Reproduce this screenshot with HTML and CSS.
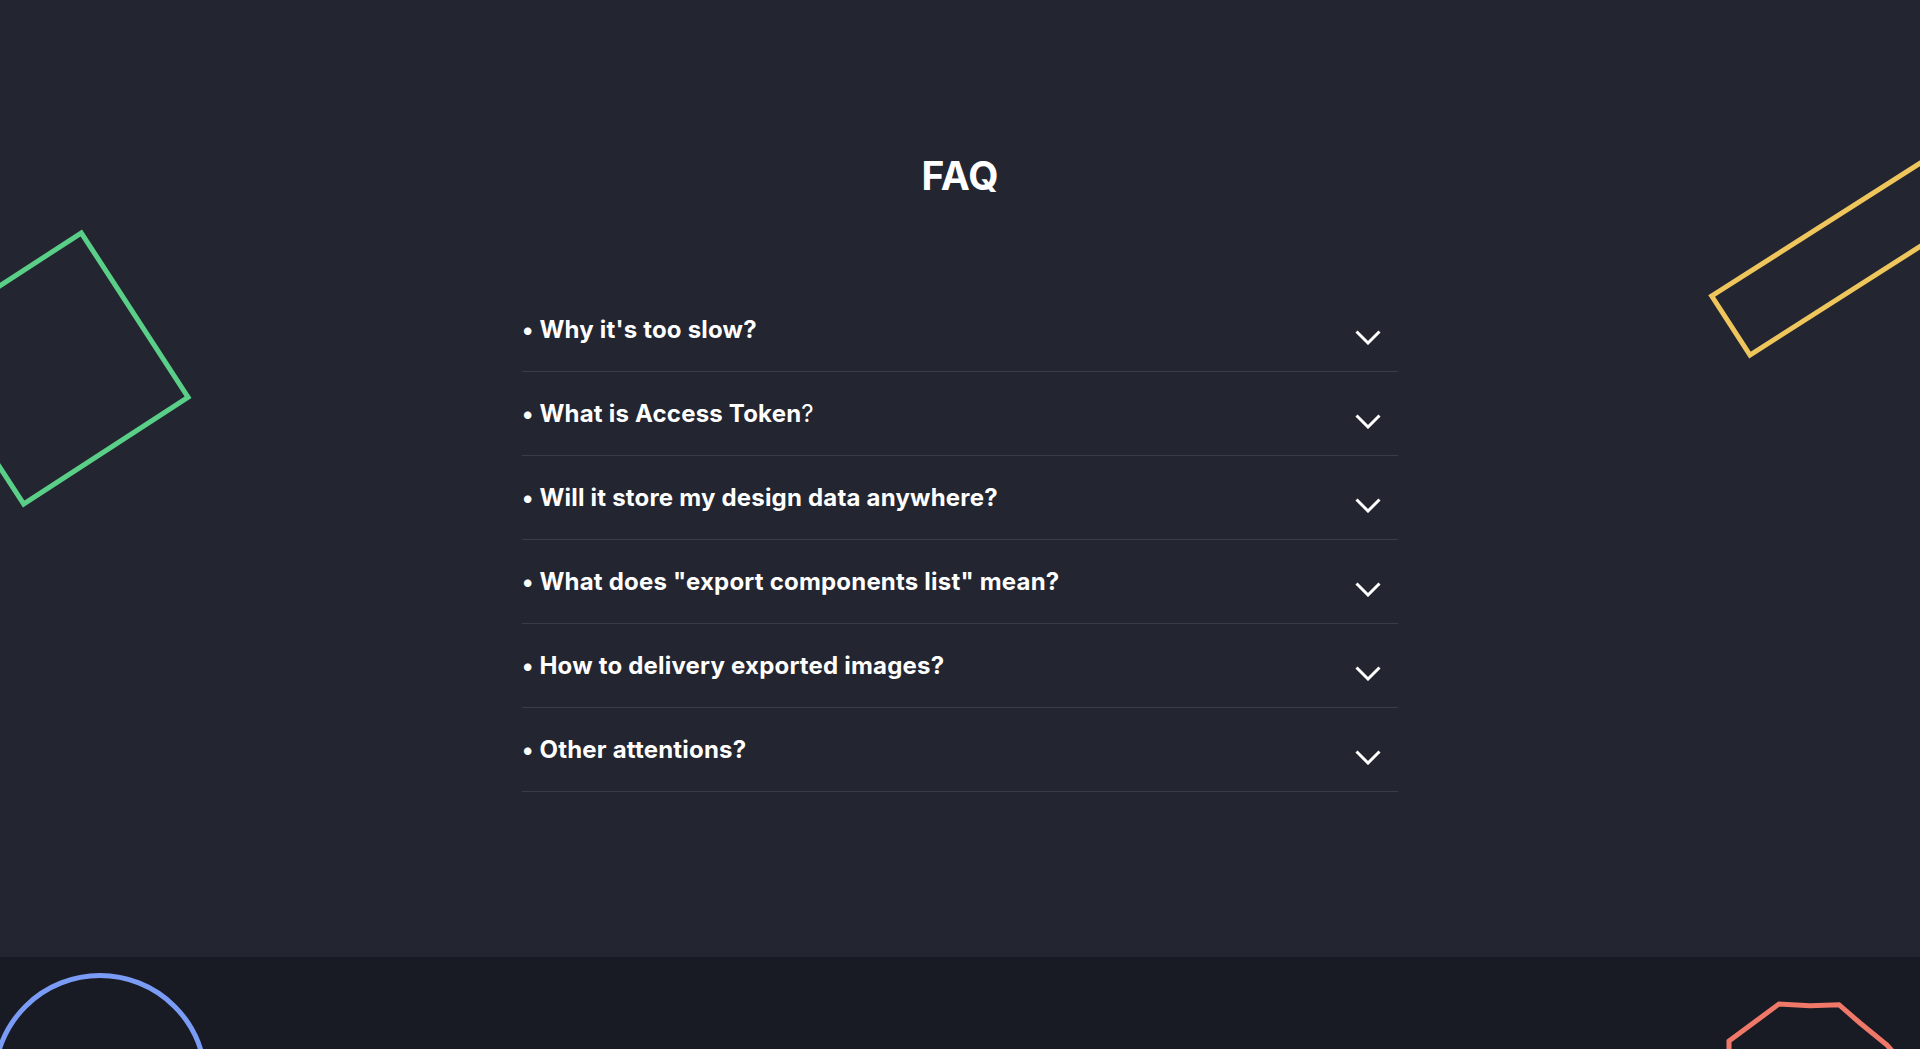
FILE: index.html
```html
<!DOCTYPE html>
<html lang="en">

<head>
  <meta charset="UTF-8">
  <meta name="viewport" content="width=device-width, initial-scale=1.0">
  <title>FAQ</title>
  <link rel="stylesheet" href="styles.css">
</head>

<body>
  <section class="faq">
    <div class="shape-square"></div>
    <svg class="shape-bar" width="230" height="320" viewBox="0 0 230 320">
      <polygon points="21.7,236 60,295 397,80 359,21" fill="none" stroke="#efc65c" stroke-width="5" />
    </svg>

    <h2>FAQ</h2>

    <div class="faq-list">
      <div class="faq-item">
        <span class="question">• Why it's too slow?</span>
        <svg class="chevron" width="26" height="15" viewBox="0 0 26 15">
          <polyline points="1.5,1.5 13,13 24.5,1.5" />
        </svg>
      </div>
      <div class="faq-item">
        <span class="question">• What is Access Token<span class="light">?</span></span>
        <svg class="chevron" width="26" height="15" viewBox="0 0 26 15">
          <polyline points="1.5,1.5 13,13 24.5,1.5" />
        </svg>
      </div>
      <div class="faq-item">
        <span class="question">• Will it store my design data anywhere?</span>
        <svg class="chevron" width="26" height="15" viewBox="0 0 26 15">
          <polyline points="1.5,1.5 13,13 24.5,1.5" />
        </svg>
      </div>
      <div class="faq-item">
        <span class="question">• What does "export components list" mean?</span>
        <svg class="chevron" width="26" height="15" viewBox="0 0 26 15">
          <polyline points="1.5,1.5 13,13 24.5,1.5" />
        </svg>
      </div>
      <div class="faq-item">
        <span class="question">• How to delivery exported images?</span>
        <svg class="chevron" width="26" height="15" viewBox="0 0 26 15">
          <polyline points="1.5,1.5 13,13 24.5,1.5" />
        </svg>
      </div>
      <div class="faq-item">
        <span class="question">• Other attentions?</span>
        <svg class="chevron" width="26" height="15" viewBox="0 0 26 15">
          <polyline points="1.5,1.5 13,13 24.5,1.5" />
        </svg>
      </div>
    </div>
  </section>

  <footer class="footer">
    <div class="shape-circle"></div>
    <svg class="shape-octagon" width="220" height="120" viewBox="0 0 220 120">
      <polyline points="29,120 29,54 79,17 110,18.7 139,17.7 160,36 187,58 215,90"
        fill="none" stroke="#f07868" stroke-width="5" />
    </svg>
  </footer>
</body>

</html>
```

FILE: styles.css
```css
* {
  box-sizing: border-box;
}

body {
  margin: 0;
  background-color: #181a24;
  font-family: Inter, "Noto Sans", sans-serif;
  color: #fff;
  overflow: hidden;
}

.faq {
  position: relative;
  height: 957px;
  padding-top: 153px;
  background-color: #232530;
  overflow: hidden;

  >h2 {
    margin: 0;
    font-size: 39px;
    line-height: 46px;
    font-weight: 700;
    text-align: center;
  }
}

.faq-list {
  width: 876px;
  margin: 89px auto 0;
}

.faq-item {
  display: flex;
  align-items: center;
  justify-content: space-between;
  height: 84px;
  border-bottom: 1px solid #3a3c47;
}

.question {
  font-size: 24px;
  font-weight: 700;
  line-height: 30px;
  letter-spacing: 0.2px;

  .light {
    font-weight: 400;
  }
}

.chevron {
  margin: 16px 17px 0 0;

  polyline {
    fill: none;
    stroke: #fff;
    stroke-width: 3;
  }
}

.shape-square {
  position: absolute;
  left: -48px;
  top: 268px;
  width: 201px;
  height: 201px;
  border: 5px solid #5acf88;
  transform: rotate(57deg);
}

.shape-bar {
  position: absolute;
  left: 1690px;
  top: 60px;
}

.footer {
  position: relative;
  height: 400px;
  overflow: hidden;
}

.shape-circle {
  position: absolute;
  left: -8px;
  top: 16px;
  width: 216px;
  height: 216px;
  border: 5px solid #7b9cf6;
  border-radius: 50%;
}

.shape-octagon {
  position: absolute;
  left: 1700px;
  top: 30px;
}
```
